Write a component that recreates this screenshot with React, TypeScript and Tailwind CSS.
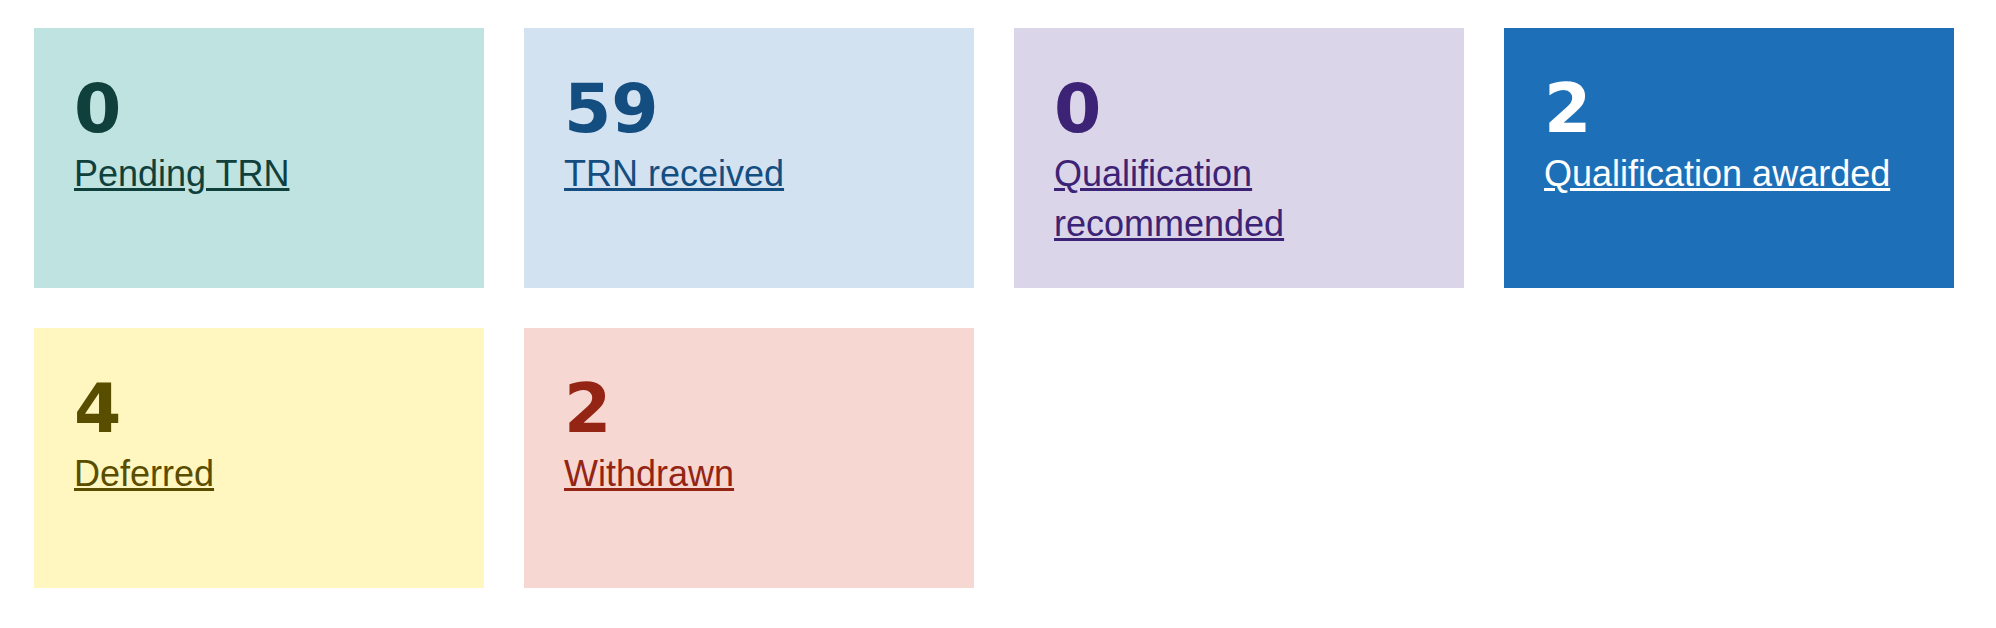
import React from 'react';

type Stat = {
  count: number;
  label: string;
  card: string;
};

const stats: Stat[] = [
  { count: 0, label: 'Pending TRN', card: 'bg-[#bfe3e0] text-[#10403c]' },
  { count: 59, label: 'TRN received', card: 'bg-[#d2e2f1] text-[#144e81]' },
  { count: 0, label: 'Qualification recommended', card: 'bg-[#dbd5e9] text-[#3d2375]' },
  { count: 2, label: 'Qualification awarded', card: 'bg-[#1d70b8] text-white' },
  { count: 4, label: 'Deferred', card: 'bg-[#fff7bf] text-[#594d00]' },
  { count: 2, label: 'Withdrawn', card: 'bg-[#f6d7d2] text-[#942514]' },
];

const StatCard: React.FC<{ stat: Stat }> = ({ stat }) => (
  <div className={`h-[260px] px-10 pt-[41px] ${stat.card}`}>
    <div className="font-['DejaVu_Sans',sans-serif] text-[68px] leading-[80px] font-bold">
      {stat.count}
    </div>
    <a
      href="#"
      className="text-[36px] leading-[50px] underline decoration-[3px] underline-offset-[2px]"
    >
      {stat.label}
    </a>
  </div>
);

const App: React.FC = () => {
  return (
    <div
      className="min-h-screen bg-white pl-[34px] pt-[28px] pb-10"
      style={{ fontFamily: '"Liberation Sans", Arial, sans-serif' }}
    >
      <div className="grid grid-cols-[repeat(4,450px)] gap-10">
        {stats.map((s) => (
          <StatCard key={s.label} stat={s} />
        ))}
      </div>
    </div>
  );
};

export default App;
